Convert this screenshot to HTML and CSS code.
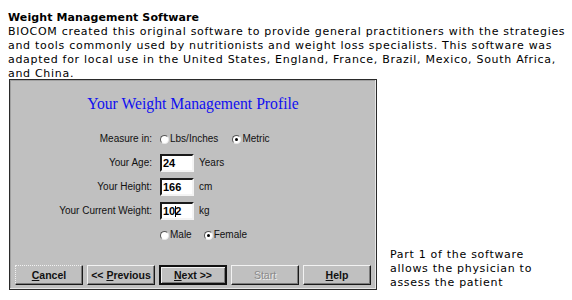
FILE: index.html
```html
<!DOCTYPE html>
<html>
<head>
<meta charset="utf-8">
<link rel="stylesheet" href="styles.css">
</head>
<body>
<div class="page">
  <h1 class="heading">Weight Management Software</h1>
  <p class="intro">BIOCOM created this original software to provide general practitioners with the strategies<br>and tools commonly used by nutritionists and weight loss specialists. This software was<br>adapted for local use in the United States, England, France, Brazil, Mexico, South Africa,<br>and China.</p>
  <div class="figure">
    <div class="dialog">
      <div class="dlg-title">Your Weight Management Profile</div>
      <div class="form">
        <div class="label">Measure in:</div>
        <div class="ctrl">
          <span class="radio"></span><span class="rlabel">Lbs/Inches</span>
          <span class="radio on gap"></span><span class="rlabel">Metric</span>
        </div>
        <div class="label">Your Age:</div>
        <div class="ctrl"><span class="field">24</span><span class="unit">Years</span></div>
        <div class="label">Your Height:</div>
        <div class="ctrl"><span class="field">166</span><span class="unit">cm</span></div>
        <div class="label">Your Current Weight:</div>
        <div class="ctrl"><span class="field">10<span class="caret"></span>2</span><span class="unit">kg</span></div>
        <div class="label"></div>
        <div class="ctrl">
          <span class="radio"></span><span class="rlabel">Male</span>
          <span class="radio on gap2"></span><span class="rlabel">Female</span>
        </div>
      </div>
      <div class="buttons">
        <span class="btn focus"><span><u>C</u>ancel</span></span>
        <span class="btn"><span>&lt;&lt; <u>P</u>revious</span></span>
        <span class="btn default"><span><u>N</u>ext &gt;&gt;</span></span>
        <span class="btn disabled"><span>Start</span></span>
        <span class="btn"><span><u>H</u>elp</span></span>
      </div>
    </div>
    <p class="caption">Part 1 of the software<br>allows the physician to<br>assess the patient</p>
  </div>
</div>
</body>
</html>
```

FILE: styles.css
```css
html, body {
  margin: 0;
  padding: 0;
  background: #ffffff;
}
.page {
  padding: 11px 8px 0 8px;
  font-family: "DejaVu Sans", Verdana, sans-serif;
  font-size: 11px;
  line-height: 14px;
  color: #000;
}
.heading {
  margin: 0;
  font-size: 11px;
  line-height: 14px;
  font-weight: bold;
  letter-spacing: 0.1px;
}
.intro {
  margin: 0;
  white-space: nowrap;
  letter-spacing: 0.7px;
}
.figure {
  display: flex;
  align-items: flex-end;
  gap: 13px;
  margin-top: -2px;
}
.dialog {
  position: relative;
  margin-left: 1px;
  width: 368px;
  height: 211px;
  box-sizing: border-box;
  border: 1px solid #2a2a2a;
  box-shadow: inset -1px -1px 0 #e8e8e8, inset 1px 1px 0 #a0a0a0;
  background: #c0c0c0;
  font-family: "Liberation Sans", Arial, sans-serif;
  font-size: 10px;
  color: #000;
  display: flex;
  flex-direction: column;
}
.dlg-title {
  margin-top: 15px;
  text-align: center;
  font-family: "Liberation Serif", "Times New Roman", serif;
  font-size: 15.7px;
  line-height: 18px;
  color: #1010f0;
}
.form {
  margin-top: 14px;
  display: grid;
  grid-template-columns: 142px auto;
  grid-auto-rows: 24px;
  column-gap: 7px;
}
.label {
  text-align: right;
  line-height: 24px;
  color: #111;
}
.ctrl {
  display: flex;
  align-items: center;
  padding-left: 1px;
}
.radio {
  width: 9px;
  height: 9px;
  border-radius: 50%;
  background: #fff;
  box-sizing: border-box;
  border: 1px solid #555;
  border-right-color: #e8e8e8;
  border-bottom-color: #e8e8e8;
  position: relative;
  margin-right: 1px;
}
.radio.on::after {
  content: "";
  position: absolute;
  left: 2px;
  top: 2px;
  width: 3px;
  height: 3px;
  border-radius: 50%;
  background: #000;
}
.radio.gap { margin-left: 14px; }
.radio.gap2 { margin-left: 12px; }
.rlabel { color: #111; }
.field {
  width: 34px;
  height: 18px;
  box-sizing: border-box;
  background: #fff;
  border: 2px solid #1a1a1a;
  border-right-color: #f4f4f4;
  border-bottom-color: #f4f4f4;
  font-weight: bold;
  font-size: 11px;
  line-height: 14px;
  padding-left: 1px;
  display: flex;
  align-items: center;
}
.caret {
  display: inline-block;
  width: 1px;
  height: 11px;
  background: #000;
  margin: 0 -1px 0 0;
}
.unit {
  margin-left: 5px;
  color: #111;
}
.buttons {
  margin-top: 18px;
  padding: 0 4px 0 5px;
  display: flex;
  gap: 4px;
}
.btn {
  width: 68px;
  height: 20px;
  box-sizing: border-box;
  display: flex;
  align-items: center;
  justify-content: center;
  font-weight: bold;
  font-size: 10.5px;
  background: #c0c0c0;
  border: 1px solid;
  border-color: #f2f2f2 #1a1a1a #1a1a1a #f2f2f2;
  box-shadow: inset -1px -1px 0 #7a7a7a;
  color: #111;
  white-space: pre;
}
.btn.focus {
  border-style: dotted solid solid dotted;
}
.btn.default {
  border: 2px solid #111;
  box-shadow: inset 1px 1px 0 #f2f2f2, inset -1px -1px 0 #7a7a7a;
}
.btn.disabled {
  color: #8a8a8a;
  font-weight: normal;
  text-shadow: 1px 1px 0 #eee;
}
.caption {
  margin: 0;
  white-space: nowrap;
  letter-spacing: 0.7px;
}
```
